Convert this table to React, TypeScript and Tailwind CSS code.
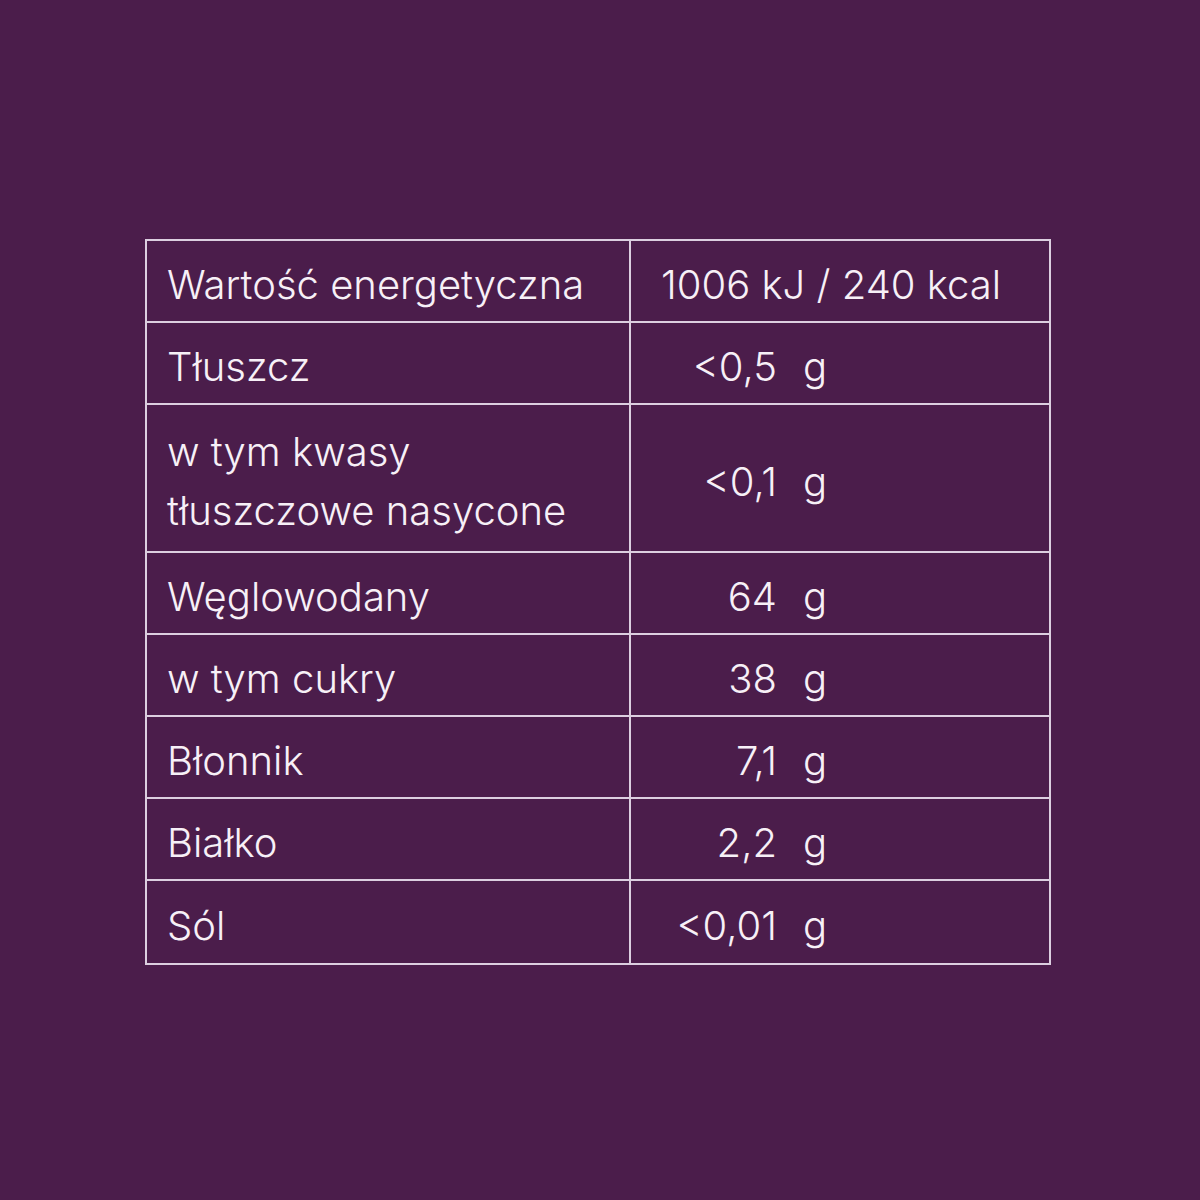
const rows: { label: string[]; value: string; unit?: string; tall?: boolean }[] = [
  { label: ["Wartość energetyczna"], value: "1006 kJ / 240 kcal" },
  { label: ["Tłuszcz"], value: "<0,5", unit: "g" },
  { label: ["w tym kwasy", "tłuszczowe nasycone"], value: "<0,1", unit: "g", tall: true },
  { label: ["Węglowodany"], value: "64", unit: "g" },
  { label: ["w tym cukry"], value: "38", unit: "g" },
  { label: ["Błonnik"], value: "7,1", unit: "g" },
  { label: ["Białko"], value: "2,2", unit: "g" },
  { label: ["Sól"], value: "<0,01", unit: "g" },
];

export default function App() {
  return (
    <div
      className="w-[1200px] h-[1200px] bg-[#4b1d4b] pl-[145px] pt-[239px] text-[#f7f0f7] font-light"
      style={{ fontFamily: "Inter, 'Noto Sans', sans-serif" }}
    >
      <table className="w-[906px] border-collapse border-2 border-[#dccfe0]">
        <tbody>
          {rows.map((r, i) => (
            <tr
              key={i}
              className={r.tall ? "h-[148px]" : i === rows.length - 1 ? "h-[84px]" : "h-[82px]"}
            >
              <td className="w-[484px] border-2 border-[#dccfe0] pl-[20px] pt-[6px] text-[40px] leading-[59px] align-middle">
                {r.label.map((l, j) => (
                  <div key={j}>{l}</div>
                ))}
              </td>
              <td className="border-2 border-[#dccfe0] pt-[6px] text-[40px] leading-[59px] align-middle">
                {r.unit ? (
                  <div className="flex items-baseline">
                    <span className="w-[146px] text-right">{r.value}</span>
                    <span className="ml-[26px]">{r.unit}</span>
                  </div>
                ) : (
                  <div className="pl-[30px]">{r.value}</div>
                )}
              </td>
            </tr>
          ))}
        </tbody>
      </table>
    </div>
  );
}
